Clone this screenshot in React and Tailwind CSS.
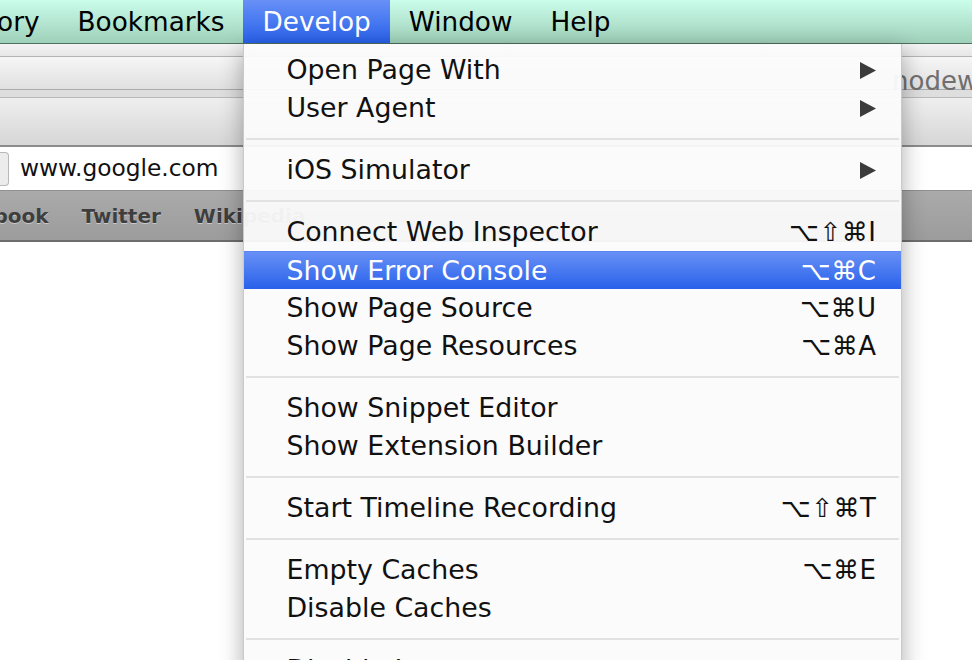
import React from 'react';

const items = [
  { label: 'Open Page With', sub: true },
  { label: 'User Agent', sub: true },
  'sep',
  { label: 'iOS Simulator', sub: true },
  'sep',
  { label: 'Connect Web Inspector', keys: '⌥⇧⌘I' },
  { label: 'Show Error Console', keys: '⌥⌘C', active: true },
  { label: 'Show Page Source', keys: '⌥⌘U' },
  { label: 'Show Page Resources', keys: '⌥⌘A' },
  'sep',
  { label: 'Show Snippet Editor' },
  { label: 'Show Extension Builder' },
  'sep',
  { label: 'Start Timeline Recording', keys: '⌥⇧⌘T' },
  'sep',
  { label: 'Empty Caches', keys: '⌥⌘E' },
  { label: 'Disable Caches' },
  'sep',
  { label: 'Disable Images' },
];

function SubArrow({ active }) {
  return (
    <svg width="16" height="17" viewBox="0 0 16 17">
      <path d="M0 0 L16 8.5 L0 17 Z" fill={active ? '#fff' : '#3b3b3b'} />
    </svg>
  );
}

function DevelopMenu() {
  return (
    <div className="absolute top-[44px] left-0 w-[659px] z-10 pt-[7px] text-[26.8px] bg-[#fbfbfb]/95 border-x border-[#c9c9c9] shadow-[0_6px_22px_rgba(0,0,0,0.32)]">
      {items.map((item, i) =>
        item === 'sep' ? (
          <div key={i} className="h-[24px] flex items-center px-[2px]">
            <div className="h-[2px] w-full bg-[#e2e2e2]" />
          </div>
        ) : (
          <div
            key={i}
            className={
              item.active
                ? 'h-[38px] flex items-center pl-[42px] pr-[25px] text-white bg-gradient-to-b from-[#6890f6] to-[#2760ea] border-t border-[#5b85f0]'
                : 'h-[38px] flex items-center pl-[42px] pr-[25px] text-[#111]'
            }
          >
            <span className="flex-1 whitespace-nowrap leading-[38px]">{item.label}</span>
            {item.sub && <SubArrow active={item.active} />}
            {item.keys && (
              <span className="whitespace-nowrap tracking-[0.5px] text-[26px] leading-[38px]">{item.keys}</span>
            )}
          </div>
        )
      )}
    </div>
  );
}

export default function App() {
  return (
    <div
      className="relative w-[972px] h-[660px] overflow-hidden bg-white"
      style={{ fontFamily: '"DejaVu Sans", "Liberation Sans", sans-serif' }}
    >
      {/* Menu bar */}
      <div className="relative z-20 flex h-[44px] border-b border-[#4f6f60] bg-gradient-to-b from-[#cafdeb] to-[#9fd0b9] text-[26.3px] text-black">
        <div className="ml-[-73px] px-[19px] pt-[2px] leading-[41px]">History</div>
        <div className="px-[19px] pt-[2px] leading-[41px]">Bookmarks</div>
        <div className="relative px-[19px] pt-[2px] leading-[41px] text-white bg-gradient-to-b from-[#6890f6] to-[#2760ea]">
          Develop
          <DevelopMenu />
        </div>
        <div className="px-[19px] pt-[2px] leading-[41px]">Window</div>
        <div className="px-[19px] pt-[2px] leading-[41px]">Help</div>
      </div>

      {/* Browser chrome under the menu */}
      <div className="h-[13px] bg-gradient-to-b from-[#f4f4f4] to-[#e6e6e6] border-b border-[#b4b4b4]" />
      <div className="relative z-[1] h-[33px] bg-gradient-to-b from-[#f6f6f6] to-[#e0e0e0] border-b border-[#aaaaaa] flex items-center">
        <span className="ml-[892px] text-[26px] text-[#6f6f6f] leading-[32px] translate-y-[8px] whitespace-nowrap">nodewebkit</span>
      </div>
      <div className="h-[8px] bg-[#dedede] border-b border-[#b9b9b9]" />
      <div className="h-[49px] bg-gradient-to-b from-[#efefef] to-[#d6d6d6] border-b-2 border-[#8c8c8c]" />
      <div className="h-[43px] bg-white flex items-center">
        <div className="w-[9px] h-[34px] bg-[#ececec] border border-l-0 border-[#b8b8b8] rounded-r-[4px]" />
        <span className="ml-[11px] text-[23.3px] text-[#111]">www.google.com</span>
      </div>
      <div className="h-[52px] bg-gradient-to-b from-[#aaaaaa] to-[#9c9c9c] border-t border-[#8f8f8f] border-b-2 border-b-[#6d6d6d] flex items-center gap-[33px] text-[20px] font-bold text-[#3e3e3e] [text-shadow:0_1px_0_rgba(255,255,255,0.45)]">
        <span className="ml-[-58px]">Facebook</span>
        <span>Twitter</span>
        <span>Wikipedia</span>
      </div>
    </div>
  );
}
